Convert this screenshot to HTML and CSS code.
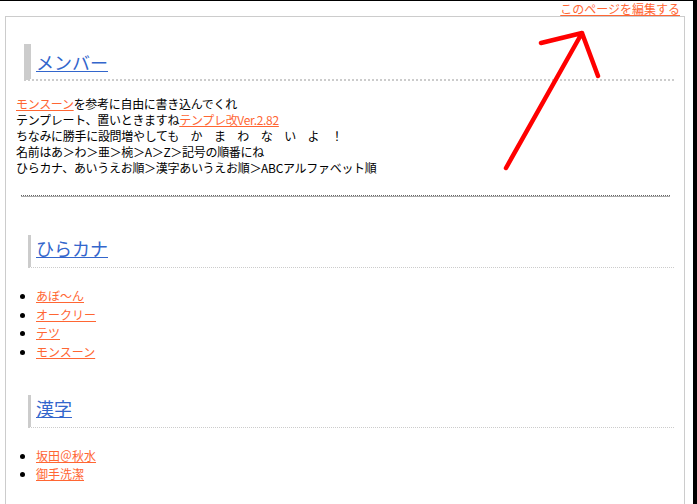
FILE: index.html
```html
<!DOCTYPE html>
<html lang="ja">
<head>
<meta charset="utf-8">
<title>メンバー</title>
<link rel="stylesheet" href="styles.css">
</head>
<body>
<div class="page">
  <div class="edit-bar"><a href="#" class="link">このページを編集する</a></div>
  <div class="box">
    <h2 class="h2"><a href="#" class="h-link">メンバー</a></h2>
    <p class="intro">
      <a href="#" class="link">モンスーン</a>を参考に自由に書き込んでくれ<br>
      テンプレート、置いときますね<a href="#" class="link">テンプレ改Ver.2.82</a><br>
      ちなみに勝手に設問増やしても　か　ま　わ　な　い　よ　！<br>
      名前はあ＞わ＞亜＞椀＞A＞Z＞記号の順番にね<br>
      ひらカナ、あいうえお順＞漢字あいうえお順＞ABCアルファベット順
    </p>
    <hr class="rule">
    <h3 class="h3"><a href="#" class="h-link">ひらカナ</a></h3>
    <ul class="list">
      <li><a href="#" class="link">あぼ～ん</a></li>
      <li><a href="#" class="link">オークリー</a></li>
      <li><a href="#" class="link">テツ</a></li>
      <li><a href="#" class="link">モンスーン</a></li>
    </ul>
    <h3 class="h3"><a href="#" class="h-link">漢字</a></h3>
    <ul class="list">
      <li><a href="#" class="link">坂田＠秋水</a></li>
      <li><a href="#" class="link">御手洗潔</a></li>
    </ul>
  </div>
  <svg class="arrow" width="697" height="200" viewBox="0 0 697 200" aria-hidden="true">
    <path d="M506 168 L582 33 M541 43 L582 33 L598 76" fill="none" stroke="#ff0000" stroke-width="4.5" stroke-linecap="round" stroke-linejoin="round"/>
  </svg>
</div>
</body>
</html>
```
FILE: styles.css
```css
html { background: #000; }
body {
  margin: 0;
  font-family: "Noto Sans CJK JP", "Noto Sans", sans-serif;
  font-size: 12px;
  color: #000;
}
.page {
  position: relative;
  margin: 1px 4px 0 0;
  background: #fff;
  min-height: 600px;
  overflow: hidden;
}
.edit-bar {
  text-align: right;
  line-height: 15px;
  padding-right: 13px;
}
.link { color: #ff6633; text-decoration: underline; }
.h-link { color: #3366cc; text-decoration: underline; }
.box {
  border: 1px solid #ccc;
  border-bottom: none;
  margin: 0 8px 0 5px;
  padding: 0 10px 40px;
  min-height: 560px;
}
.h2 {
  margin: 27px 0 15px 8px;
  padding: 5px 0 4px 5px;
  font-size: 18px;
  font-weight: normal;
  line-height: 26px;
  border-left: 7px solid #ccc;
  border-bottom: 2px dotted #ccc;
}
.intro {
  margin: 0;
  line-height: 16px;
  letter-spacing: -0.3px;
}
.rule {
  margin: 19px 4px 38px 5px;
  height: 0;
  border: 0;
  border-top: 1px dotted #666;
  border-bottom: 1px solid #aaa;
}
.h3 {
  margin: 0 0 0 12px;
  padding: 0 0 6px 5px;
  font-size: 18px;
  font-weight: normal;
  line-height: 26px;
  border-left: 3px solid #ccc;
  border-bottom: 1px dotted #ccc;
}
.list {
  margin: 19px 0 33px;
  padding: 0 0 0 20px;
  line-height: 18.67px;
}
.arrow {
  position: absolute;
  left: 0;
  top: -1px;
}
```
